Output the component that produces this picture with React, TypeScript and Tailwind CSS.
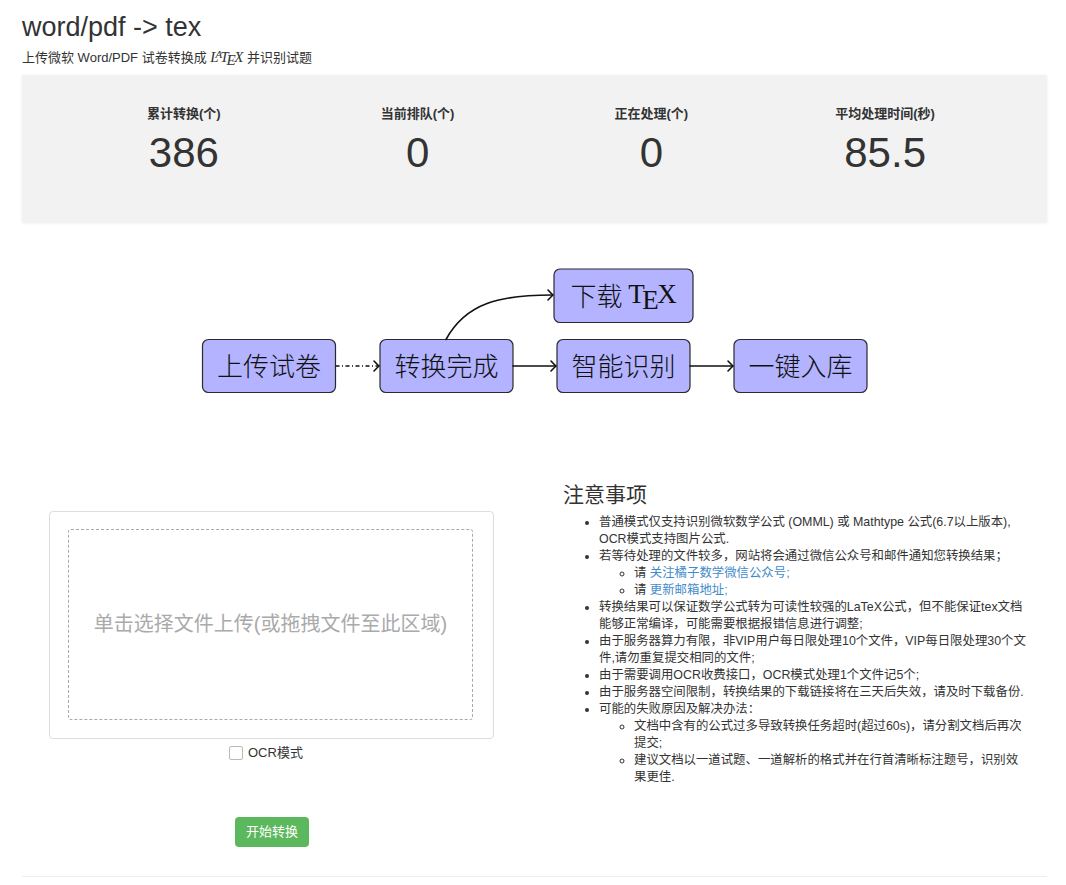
import React from "react";

const stats = [
  { label: "累计转换(个)", value: "386" },
  { label: "当前排队(个)", value: "0" },
  { label: "正在处理(个)", value: "0" },
  { label: "平均处理时间(秒)", value: "85.5" },
];

const nodes = [
  { x: 180.5, y: 78.5, w: 133, label: "上传试卷" },
  { x: 358, y: 78.5, w: 133, label: "转换完成" },
  { x: 535, y: 78.5, w: 133, label: "智能识别" },
  { x: 712, y: 78.5, w: 133, label: "一键入库" },
];

const arrowHead = (x: number, y: number) =>
  `M ${x - 5} ${y - 5} Q ${x - 1.6} ${y - 1.4} ${x} ${y} Q ${x - 1.6} ${y + 1.4} ${x - 5} ${y + 5}`;

const FlowChart = () => (
  <svg width="1025" height="140" viewBox="0 0 1025 140" className="mt-[39px] block">
    {nodes.map((n) => (
      <g key={n.label}>
        <rect x={n.x} y={n.y} width={n.w} height={53} rx={6} fill="#b3b3ff" stroke="#2a2a2a" strokeWidth={1.2} />
        <text
          x={n.x + n.w / 2}
          y={n.y + 25}
          textAnchor="middle"
          dominantBaseline="central"
          fontSize={26}
          fontWeight={300}
          fill="#111"
          fontFamily="'Noto Sans CJK SC', sans-serif"
        >
          {n.label}
        </text>
      </g>
    ))}
    <rect x={532} y={8} width={139} height={53.5} rx={6} fill="#b3b3ff" stroke="#2a2a2a" strokeWidth={1.2} />
    <text x={601.5} y={33} textAnchor="middle" dominantBaseline="central" fontSize={26} fill="#111">
      <tspan fontFamily="'Noto Sans CJK SC', sans-serif" fontWeight={300}>下载 </tspan>
      <tspan fontFamily="'Liberation Serif', serif" fontSize={27}>T</tspan>
      <tspan fontFamily="'Liberation Serif', serif" fontSize={27} dx={-2.5} dy={6}>E</tspan>
      <tspan fontFamily="'Liberation Serif', serif" fontSize={27} dx={-1.5} dy={-6}>X</tspan>
    </text>

    <g fill="none" stroke="#111" strokeWidth={1.6} strokeLinecap="round">
      <line x1={313.5} y1={105} x2={356} y2={105} strokeDasharray="4 2.5 1 2.5" strokeLinecap="butt" />
      <path d={arrowHead(357, 105)} />
      <line x1={491} y1={105} x2={533.5} y2={105} />
      <path d={arrowHead(534, 105)} />
      <line x1={668} y1={105} x2={710.5} y2={105} />
      <path d={arrowHead(711, 105)} />
      <path d="M 424 78.5 C 444 42, 478 34, 530 34" />
      <path d={arrowHead(531, 34)} />
    </g>
  </svg>
);

const LatexLogo = () => (
  <span className="font-['Liberation_Serif',serif] text-[15px] italic">
    L<span className="relative -top-[0.3em] -ml-[0.3em] text-[0.72em]">A</span>
    <span className="-ml-[0.12em]">T</span>
    <span className="relative top-[0.22em] -ml-[0.14em]">E</span>
    <span className="-ml-[0.1em]">X</span>
  </span>
);

export default function App() {
  return (
    <div className="min-h-screen bg-white pl-[22px] pr-[19px] font-['Liberation_Sans','Noto_Sans_CJK_SC',sans-serif] text-[#333]">
      <h1 className="pt-[13px] text-[27px] leading-[1.1] font-normal">word/pdf -&gt; tex</h1>
      <p className="mt-[5px] text-[13px] leading-[18px]">
        上传微软 Word/PDF 试卷转换成 <LatexLogo /> 并识别试题
      </p>

      <div className="mt-[8px] grid grid-cols-4 bg-[#f2f2f2] px-[45px] pt-[30px] pb-[46px] shadow-[0_1px_3px_rgba(0,0,0,0.08)]">
        {stats.map((s) => (
          <div key={s.label} className="text-center">
            <div className="text-[13px] leading-[18px] font-bold">{s.label}</div>
            <div className="mt-[7px] text-[42px] leading-[46px]">{s.value}</div>
          </div>
        ))}
      </div>

      <FlowChart />

      <div className="flex items-start">
        <div className="w-[500px] shrink-0">
          <div className="mt-[110px] ml-[27px] w-[445px] rounded-[4px] border border-[#ddd] pt-[17px] pr-[20px] pb-[18px] pl-[18px]">
            <div className="flex h-[191px] items-center justify-center rounded-[3px] border border-dashed border-[#aaa] text-[20px] text-[#aaa]">
              单击选择文件上传(或拖拽文件至此区域)
            </div>
          </div>
          <label className="mt-[7px] flex items-center pl-[207px] text-[13px] leading-[14px]">
            <span className="h-[14px] w-[14px] rounded-[2px] border border-[#bbb] bg-white" />
            <span className="ml-[5px]">OCR模式</span>
          </label>
          <button className="mt-[57px] ml-[213px] h-[30px] w-[74px] rounded-[4px] bg-[#5cb85c] text-[13px] text-white">
            开始转换
          </button>
        </div>

        <div className="ml-[41px] w-[465px] shrink-0">
          <h3 className="mt-[82px] text-[21px] leading-[23px] font-normal">注意事项</h3>
          <ul className="mt-[8px] list-disc pl-[36px] text-[12.4px] leading-[17px]">
            <li>普通模式仅支持识别微软数学公式 (OMML) 或 Mathtype 公式(6.7以上版本), OCR模式支持图片公式.</li>
            <li>
              若等待处理的文件较多，网站将会通过微信公众号和邮件通知您转换结果；
              <ul className="list-[circle] pl-[35px]">
                <li>
                  请 <a className="text-[#428bca]">关注橘子数学微信公众号;</a>
                </li>
                <li>
                  请 <a className="text-[#428bca]">更新邮箱地址;</a>
                </li>
              </ul>
            </li>
            <li>转换结果可以保证数学公式转为可读性较强的LaTeX公式，但不能保证tex文档能够正常编译，可能需要根据报错信息进行调整;</li>
            <li>由于服务器算力有限，非VIP用户每日限处理10个文件，VIP每日限处理30个文件,请勿重复提交相同的文件;</li>
            <li>由于需要调用OCR收费接口，OCR模式处理1个文件记5个;</li>
            <li>由于服务器空间限制，转换结果的下载链接将在三天后失效，请及时下载备份.</li>
            <li>
              可能的失败原因及解决办法：
              <ul className="list-[circle] pl-[35px]">
                <li>文档中含有的公式过多导致转换任务超时(超过60s)，请分割文档后再次提交;</li>
                <li>建议文档以一道试题、一道解析的格式并在行首清晰标注题号，识别效果更佳.</li>
              </ul>
            </li>
          </ul>
        </div>
      </div>

      <div className="mt-[29px] border-t border-[#eee]" />
    </div>
  );
}
